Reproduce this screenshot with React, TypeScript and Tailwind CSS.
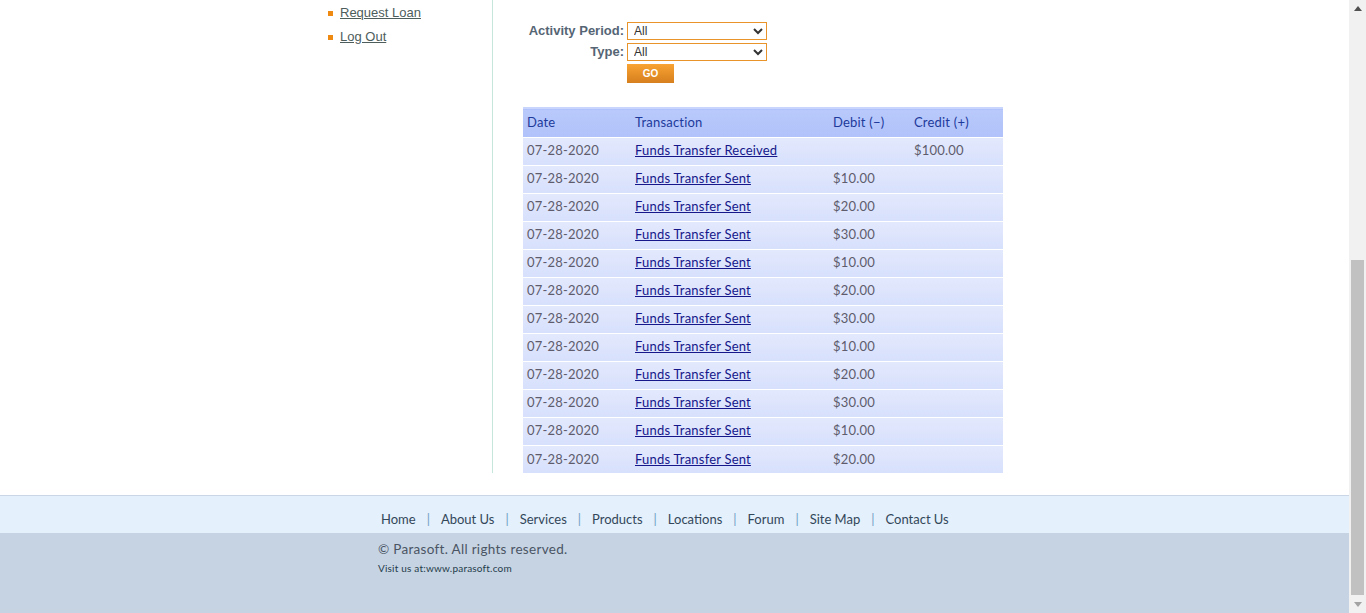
import React from "react";

const ROWS = [
  { date: "07-28-2020", label: "Funds Transfer Received", debit: "", credit: "$100.00" },
  { date: "07-28-2020", label: "Funds Transfer Sent", debit: "$10.00", credit: "" },
  { date: "07-28-2020", label: "Funds Transfer Sent", debit: "$20.00", credit: "" },
  { date: "07-28-2020", label: "Funds Transfer Sent", debit: "$30.00", credit: "" },
  { date: "07-28-2020", label: "Funds Transfer Sent", debit: "$10.00", credit: "" },
  { date: "07-28-2020", label: "Funds Transfer Sent", debit: "$20.00", credit: "" },
  { date: "07-28-2020", label: "Funds Transfer Sent", debit: "$30.00", credit: "" },
  { date: "07-28-2020", label: "Funds Transfer Sent", debit: "$10.00", credit: "" },
  { date: "07-28-2020", label: "Funds Transfer Sent", debit: "$20.00", credit: "" },
  { date: "07-28-2020", label: "Funds Transfer Sent", debit: "$30.00", credit: "" },
  { date: "07-28-2020", label: "Funds Transfer Sent", debit: "$10.00", credit: "" },
  { date: "07-28-2020", label: "Funds Transfer Sent", debit: "$20.00", credit: "" },
];

const FOOTER_LINKS = ["Home", "About Us", "Services", "Products", "Locations", "Forum", "Site Map", "Contact Us"];

function Scrollbar() {
  return (
    <div className="w-[17px] h-[613px] bg-[#f1f1f1] flex flex-col items-center shrink-0">
      <div className="h-[17px] flex items-center justify-center">
        <svg width="8" height="5" viewBox="0 0 8 5"><path d="M0 5 L4 0 L8 5 Z" fill="#505050" /></svg>
      </div>
      <div className="h-[243px]" />
      <div className="w-[13px] h-[335px] bg-[#c1c1c1]" />
      <div className="flex-1 flex items-center justify-center">
        <svg width="8" height="5" viewBox="0 0 8 5"><path d="M0 0 L4 5 L8 0 Z" fill="#a3a3a3" /></svg>
      </div>
    </div>
  );
}

export default function App() {
  return (
    <div className="flex w-[1366px] h-[613px] overflow-hidden bg-white">
      <div className="flex-1 flex flex-col">
        {/* Main */}
        <div className="h-[495px] flex flex-col">
          <div className="flex h-[473px]">
            <div className="ml-[312px] w-[181px] border-r border-[#c6e6dd] pl-[16px] pt-[4px]" style={{ fontFamily: "'Liberation Sans', Arial, sans-serif" }}>
              <ul className="flex flex-col gap-[6px]">
                {["Request Loan", "Log Out"].map(item => (
                  <li key={item} className="flex items-center h-[18px]">
                    <span className="w-[5px] h-[5px] bg-[#ee8a12] mr-[7px]" />
                    <a href="#" className="text-[13px] text-[#4d5d5c] underline">{item}</a>
                  </li>
                ))}
              </ul>
            </div>

            <div className="ml-[30px] pt-[22px]">
              {/* Filter */}
              <div className="grid grid-cols-[101px_140px] auto-rows-[18px] gap-x-[3px] gap-y-[3px] items-center" style={{ fontFamily: "'Liberation Sans', Arial, sans-serif" }}>
                <label className="text-right text-[13px] font-bold text-[#556574] whitespace-nowrap">Activity Period:</label>
                <select className="h-[18px] border border-[#e8942a] text-[12px] text-[#333] bg-white px-[2px]">
                  <option>All</option>
                </select>
                <label className="text-right text-[13px] font-bold text-[#556574] whitespace-nowrap">Type:</label>
                <select className="h-[18px] border border-[#e8942a] text-[12px] text-[#333] bg-white px-[2px]">
                  <option>All</option>
                </select>
                <div />
                <button className="w-[47px] h-[19px] bg-gradient-to-b from-[#f8a332] to-[#d67f1e] text-white text-[10px] font-bold">GO</button>
              </div>

              {/* Transactions */}
              <table className="mt-[25px] w-[480px] text-[13px] tracking-[0.2px] border-collapse" style={{ fontFamily: "Lato, 'Open Sans', sans-serif" }}>
                <thead>
                  <tr className="h-[29px] border-t-2 border-[#c9d5fc] bg-gradient-to-b from-[#b9c9fb] to-[#b0c2fa] text-[#1d3a9b] text-left">
                    <th className="font-normal pl-[4px] w-[108px]">Date</th>
                    <th className="font-normal pl-[4px] w-[198px]">Transaction</th>
                    <th className="font-normal pl-[4px] w-[81px]">Debit (−)</th>
                    <th className="font-normal pl-[4px]">Credit (+)</th>
                  </tr>
                </thead>
                <tbody>
                  {ROWS.map((r, i) => (
                    <tr key={i} className="h-[28px] border-t border-white bg-gradient-to-b from-[#e3e9fd] to-[#d7e0fc] text-[#5e5c6c]">
                      <td className="pl-[4px]">{r.date}</td>
                      <td className="pl-[4px]"><a href="#" className="text-[#15178a] underline">{r.label}</a></td>
                      <td className="pl-[4px]">{r.debit}</td>
                      <td className="pl-[4px]">{r.credit}</td>
                    </tr>
                  ))}
                </tbody>
              </table>
            </div>
          </div>
        </div>

        {/* Footer */}
        <div className="border-t border-[#cad6e6] h-[38px] bg-[#e4f0fb] pl-[381px] pt-[15px] text-[13px] text-[#33475a]" style={{ fontFamily: "Lato, 'Open Sans', sans-serif" }}>
          <div className="flex items-center leading-[16px]">
            {FOOTER_LINKS.map((link, i) => (
              <React.Fragment key={link}>
                {i > 0 && <span className="mx-[11px] text-[#6e9fc4]">|</span>}
                <a href="#">{link}</a>
              </React.Fragment>
            ))}
          </div>
        </div>
        <div className="flex-1 bg-[#c6d3e3] pl-[378px] pt-[6px]" style={{ fontFamily: "Lato, 'Open Sans', sans-serif" }}>
          <p className="text-[13.5px] tracking-[0.3px] text-[#4a5563]">© Parasoft. All rights reserved.</p>
          <p className="text-[10px] tracking-[0.2px] text-[#1e3c4a] mt-[2px]">Visit us at:<a href="#">www.parasoft.com</a></p>
        </div>
      </div>
      <Scrollbar />
    </div>
  );
}
